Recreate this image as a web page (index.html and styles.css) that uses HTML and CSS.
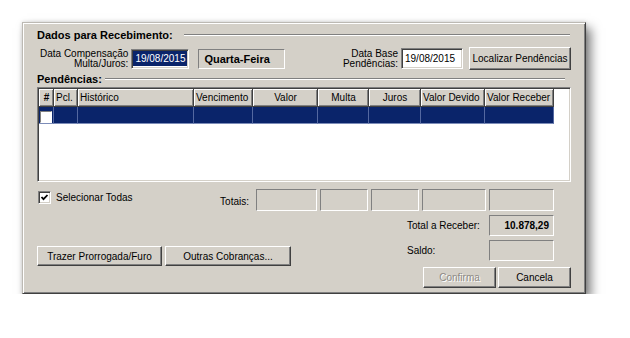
FILE: index.html
```html
<!DOCTYPE html>
<html lang="pt-BR">
<head>
  <meta charset="UTF-8" />
  <title>Dados para Recebimento</title>
  <link rel="stylesheet" href="styles.css">
</head>
<body>
  <div class="screen">
    <div class="dialog">
      <div class="group-title">Dados para Recebimento:</div>

      <div class="row-dates">
        <div class="field-label">Data Compensação<br>Multa/Juros:</div>
        <div class="input input-comp"><span class="selection">19/08/2015</span></div>
        <div class="weekday">Quarta-Feira</div>
        <div class="spacer"></div>
        <div class="field-label">Data Base<br>Pendências:</div>
        <div class="input input-base">19/08/2015</div>
        <button class="btn btn-find">Localizar Pendências</button>
      </div>

      <div class="group-title group-title-tight">Pendências:</div>

      <div class="grid">
        <table>
          <colgroup>
            <col class="c-num"><col class="c-pcl"><col class="c-hist"><col class="c-venc"><col class="c-valor">
            <col class="c-multa"><col class="c-juros"><col class="c-devido"><col class="c-receber">
          </colgroup>
          <thead>
            <tr>
              <th class="center strong">#</th>
              <th>Pcl.</th>
              <th>Histórico</th>
              <th>Vencimento</th>
              <th class="center">Valor</th>
              <th class="center">Multa</th>
              <th class="center">Juros</th>
              <th>Valor Devido</th>
              <th>Valor Receber</th>
            </tr>
          </thead>
          <tbody>
            <tr>
              <td><span class="cell-check"></span></td>
              <td></td><td></td><td></td><td></td><td></td><td></td><td></td><td></td>
            </tr>
          </tbody>
        </table>
      </div>

      <div class="row-totals">
        <label class="check-all">
          <span class="checkbox">
            <svg width="9" height="9" viewBox="0 0 9 9"><polyline points="1.5,4 3.5,6.2 7.5,2" fill="none" stroke="#000" stroke-width="1.8"/></svg>
          </span>
          Selecionar Todas
        </label>
        <div class="spacer"></div>
        <span class="totals-label">Totais:</span>
        <div class="totals">
          <div class="box t-valor"></div>
          <div class="box t-multa"></div>
          <div class="box t-juros"></div>
          <div class="box t-devido"></div>
          <div class="box t-receber"></div>
        </div>
      </div>

      <div class="row-bottom">
        <div class="left-actions">
          <button class="btn btn-wide">Trazer Prorrogada/Furo</button>
          <button class="btn btn-wide">Outras Cobranças...</button>
        </div>
        <div class="summary">
          <div class="sum-row">
            <span class="sum-label">Total a Receber:</span>
            <div class="box sum-box">10.878,29</div>
          </div>
          <div class="sum-row sum-row-gap">
            <span class="sum-label">Saldo:</span>
            <div class="box sum-box"></div>
          </div>
          <div class="actions">
            <button class="btn btn-action" disabled>Confirma</button>
            <button class="btn btn-action">Cancela</button>
          </div>
        </div>
      </div>
    </div>
  </div>
</body>
</html>
```

FILE: styles.css
```css
body {
  margin: 0;
  background: #fff;
  font-family: 'Liberation Sans', Arial, sans-serif;
  font-size: 10px;
  color: #000;
}

.screen {
  padding: 22px 0 0 22px;
}

.dialog {
  width: 564px;
  box-sizing: border-box;
  background: #d4d0c8;
  border: 1px solid;
  border-color: #bcb9b3 #404040 #404040 #bcb9b3;
  box-shadow: inset 1px 1px #fff, inset -1px -1px #808080, 5px 6px 10px rgba(0, 0, 0, 0.5), 0 0 4px rgba(0, 0, 0, 0.15);
  padding: 0 14px 5px 14px;
}

.spacer {
  flex: 1;
}

/* group headings with etched line */
.group-title {
  display: flex;
  align-items: center;
  height: 12px;
  margin-top: 6px;
  font-size: 11px;
  font-weight: bold;
}

.group-title::after {
  content: '';
  flex: 1;
  margin-left: 11px;
  margin-right: 1px;
  border-top: 1px solid #808080;
  border-bottom: 1px solid #fff;
}

.group-title-tight {
  margin-top: 3px;
}

.group-title-tight::after {
  margin-left: 3px;
  margin-right: 6px;
}

/* classic bevels */
.btn {
  font-family: inherit;
  font-size: 10px;
  color: #000;
  background: #d4d0c8;
  border: 1px solid;
  border-color: #fff #404040 #404040 #fff;
  box-shadow: inset -1px -1px #808080;
  padding: 0;
  margin: 0;
}

.btn:disabled {
  color: #8d8a85;
  text-shadow: 1px 1px #fff;
}

.input {
  box-sizing: border-box;
  display: flex;
  align-items: center;
  background: #fff;
  border: 1px solid;
  border-color: #808080 #fff #fff #808080;
  box-shadow: inset 1px 1px #404040, inset -1px -1px #d4d0c8;
  padding: 0 2px 0 3px;
}

.box {
  box-sizing: border-box;
  border: 1px solid;
  border-color: #808080 #fff #fff #808080;
}

/* first row: dates */
.row-dates {
  display: flex;
  align-items: center;
  height: 23px;
  margin-top: 6px;
}

.field-label {
  text-align: right;
  line-height: 10px;
  margin: 1px 3px 0 3px;
}

.input-comp {
  width: 58px;
  height: 20px;
  padding-left: 1px;
}

.selection {
  background: #0a246a;
  color: #fff;
  padding: 2px 2px 1px 2px;
  line-height: 12px;
}

.weekday {
  box-sizing: border-box;
  width: 87px;
  height: 20px;
  margin-left: 9px;
  padding-left: 5px;
  display: flex;
  align-items: center;
  font-size: 11px;
  font-weight: bold;
  border: 1px solid;
  border-color: #808080 #fff #fff #808080;
}

.input-base {
  width: 62px;
  height: 21px;
}

.btn-find {
  width: 102px;
  height: 23px;
  margin-left: 6px;
}

/* grid */
.grid {
  box-sizing: border-box;
  height: 95px;
  margin-top: 2px;
  background: #fff;
  border: 1px solid;
  border-color: #808080 #fff #fff #808080;
  box-shadow: inset 1px 1px #404040, inset -1px -1px #d4d0c8;
  padding: 1px;
  overflow: hidden;
}

table {
  border-collapse: separate;
  border-spacing: 0;
  table-layout: fixed;
  width: 515px;
}

.c-num { width: 15px; }
.c-pcl { width: 24px; }
.c-hist { width: 116px; }
.c-venc { width: 59px; }
.c-valor { width: 65px; }
.c-multa { width: 51px; }
.c-juros { width: 52px; }
.c-devido { width: 64px; }
.c-receber { width: 69px; }

th {
  height: 17px;
  padding: 0 1px 0 2px;
  font-weight: normal;
  text-align: left;
  white-space: nowrap;
  overflow: hidden;
  background: #d4d0c8;
  border-right: 1px solid #404040;
  border-bottom: 1px solid #404040;
  box-shadow: inset 1px 1px #fff, inset -1px -1px #808080;
}

th.center {
  text-align: center;
}

th.strong {
  font-weight: bold;
}

td {
  height: 16px;
  padding: 0;
  background: #0a246a;
  border-right: 1px solid #5468a0;
  border-bottom: 1px solid #7c8cb8;
  vertical-align: bottom;
}

.cell-check {
  display: block;
  width: 10px;
  height: 10px;
  margin: 0 0 0 1px;
  background: #fff;
  border: 1px solid;
  border-color: #808080 #fff #fff #808080;
}

/* totals row */
.row-totals {
  display: flex;
  height: 22px;
  margin-top: 7px;
}

.check-all {
  display: flex;
  align-items: center;
  gap: 5px;
  height: 13px;
  margin: 2px 0 0 1px;
}

.checkbox {
  box-sizing: border-box;
  width: 13px;
  height: 13px;
  display: flex;
  align-items: center;
  justify-content: center;
  background: #fff;
  border: 1px solid;
  border-color: #808080 #fff #fff #808080;
  box-shadow: inset 1px 1px #404040, inset -1px -1px #d4d0c8;
}

.totals-label {
  align-self: center;
  margin: 2px 7px 0 0;
}

.totals {
  display: flex;
  gap: 3px;
  margin-right: 17px;
}

.totals .box {
  height: 22px;
}

.t-valor { width: 61px; }
.t-multa { width: 48px; }
.t-juros { width: 48px; }
.t-devido { width: 64px; }
.t-receber { width: 65px; }

/* bottom area */
.row-bottom {
  display: flex;
  justify-content: space-between;
  margin-top: 4px;
}

.left-actions {
  display: flex;
  gap: 3px;
  padding-top: 31px;
}

.btn-wide {
  width: 125px;
  height: 20px;
}

.btn-wide + .btn-wide {
  width: 126px;
}

.summary {
  width: 164px;
  display: flex;
  flex-direction: column;
}

.sum-row {
  display: flex;
  align-items: center;
  height: 21px;
}

.sum-row-gap {
  margin-top: 4px;
}

.sum-label {
  flex: 1;
}

.sum-box {
  width: 65px;
  height: 21px;
  margin-right: 17px;
  display: flex;
  align-items: center;
  justify-content: flex-end;
  padding-right: 4px;
  font-weight: bold;
}

.actions {
  display: flex;
  justify-content: flex-end;
  gap: 2px;
  margin-top: 6px;
}

.btn-action {
  width: 73px;
  height: 21px;
}
```
